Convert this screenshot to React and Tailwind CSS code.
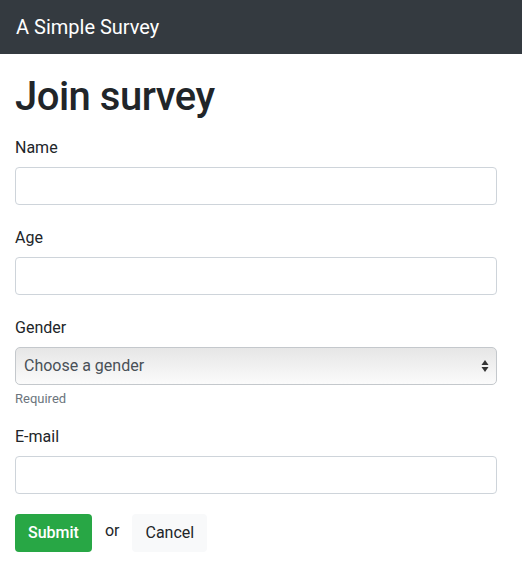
import React from "react";

const Field = ({ label, children, className = "mb-5" }) => (
    <div className={className}>
        <label className="block h-6 leading-[26px] mb-2 text-base text-[#212529]">{label}</label>
        {children}
    </div>
);

const TextInput = () => (
    <input
        type="text"
        className="block w-full h-[38px] px-3 border border-[#ced4da] rounded bg-white text-base text-[#495057] focus:outline-none"
    />
);

export default function App() {
    return (
        <div className="min-h-screen bg-white font-['Roboto','Liberation_Sans',sans-serif]">
            <nav className="h-[54px] bg-[#343a40] flex items-center px-4">
                <span className="text-white text-xl">A Simple Survey</span>
            </nav>

            <div className="pl-[15px] pr-[25px]">
                <h1 className="mt-[19px] mb-[14px] text-[40px] leading-[48px] font-medium tracking-[-0.5px] text-[#212529]">
                    Join survey
                </h1>

                <form>
                    <Field label="Name">
                        <TextInput />
                    </Field>

                    <Field label="Age">
                        <TextInput />
                    </Field>

                    <div className="mb-4">
                        <label className="block h-6 leading-[26px] mb-2 text-base text-[#212529]">Gender</label>
                        <div className="relative">
                            <select className="appearance-none block w-full h-[38px] pl-2 pr-8 border border-[#c4c8cc] rounded-[5px] bg-gradient-to-b from-[#e6e6e6] to-[#fbfbfb] text-base text-[#495057] focus:outline-none">
                                <option>Choose a gender</option>
                                <option>Female</option>
                                <option>Male</option>
                                <option>Other</option>
                            </select>
                            <svg
                                className="absolute right-[8px] top-[12px] pointer-events-none"
                                width="8"
                                height="14"
                                viewBox="0 0 8 14"
                            >
                                <path d="M4 1 L7.5 6 L0.5 6 Z" fill="#333" />
                                <path d="M4 13 L7.5 8 L0.5 8 Z" fill="#333" />
                            </svg>
                        </div>
                        <small className="block mt-1 text-[13px] leading-[19px] text-[#6c757d]">Required</small>
                    </div>

                    <Field label="E-mail">
                        <TextInput />
                    </Field>

                    <div className="flex items-center">
                        <button
                            type="button"
                            className="h-[38px] px-[13px] rounded bg-[#28a745] text-white text-base font-medium"
                        >
                            Submit
                        </button>
                        <span className="mx-[13px] -mt-1 text-base text-[#212529]">or</span>
                        <button
                            type="button"
                            className="h-[38px] px-[13px] rounded bg-[#f8f9fa] text-[#212529] text-base"
                        >
                            Cancel
                        </button>
                    </div>
                </form>
            </div>
        </div>
    );
}
